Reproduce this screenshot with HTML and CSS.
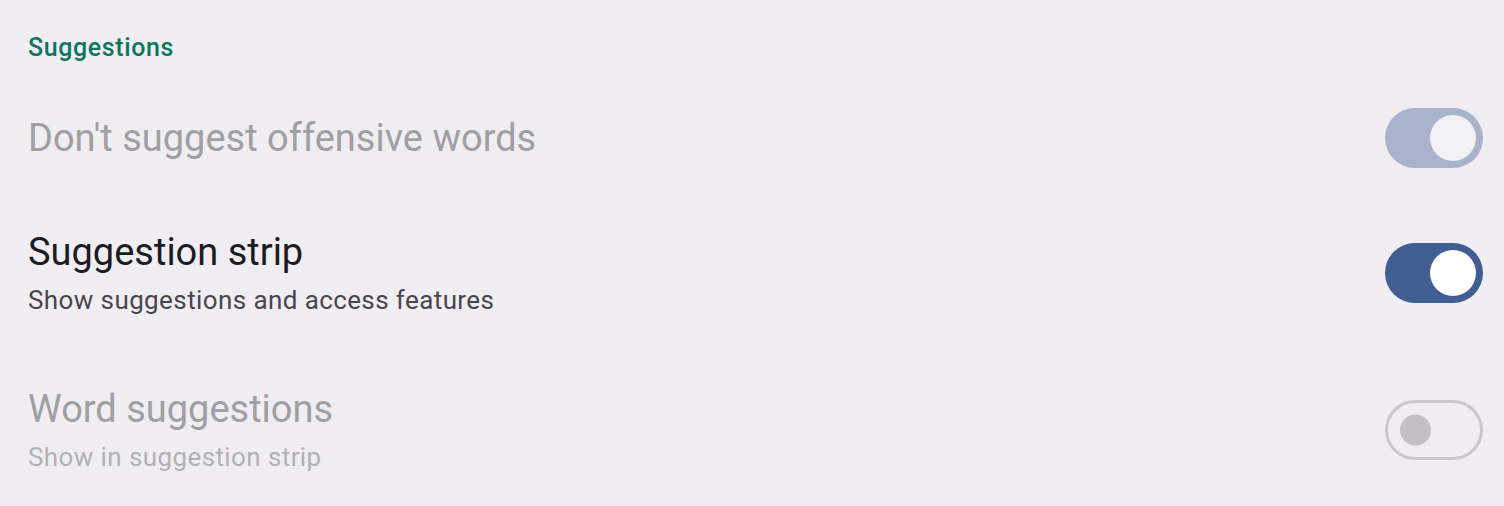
FILE: index.html
```html
<!DOCTYPE html>
<html>
<head>
  <title>Suggestions</title>
  <link rel="stylesheet" href="styles.css">
</head>
<body>
  <div class="settings">
    <h2 class="section-title">Suggestions</h2>

    <div class="pref disabled single">
      <div class="pref-text">
        <div class="pref-title">Don't suggest offensive words</div>
      </div>
      <div class="switch on"><div class="thumb"></div></div>
    </div>

    <div class="pref double">
      <div class="pref-text">
        <div class="pref-title">Suggestion strip</div>
        <div class="pref-summary">Show suggestions and access features</div>
      </div>
      <div class="switch on"><div class="thumb"></div></div>
    </div>

    <div class="pref disabled double last">
      <div class="pref-text">
        <div class="pref-title">Word suggestions</div>
        <div class="pref-summary">Show in suggestion strip</div>
      </div>
      <div class="switch off"><div class="thumb"></div></div>
    </div>
  </div>
</body>
</html>
```

FILE: styles.css
```css
html, body {
  margin: 0;
  height: 100%;
}

body {
  font-family: Roboto, "Noto Sans", sans-serif;
  background-color: #f0eef3;
  overflow: hidden;
}

.settings {
  padding: 0 21px 0 28px;
}

.section-title {
  margin: 0;
  padding-top: 32px;
  height: 84px;
  font-size: 25px;
  font-weight: 500;
  letter-spacing: 0.6px;
  line-height: 32px;
  color: #0d7560;
  box-sizing: border-box;
}

.pref {
  display: flex;
  align-items: center;
  justify-content: space-between;
}

.pref.single {
  height: 108px;
}

.pref.double {
  height: 162px;
}

.pref.last {
  height: 152px;
}

.pref-text {
  display: flex;
  flex-direction: column;
}

.pref-title {
  font-size: 38px;
  line-height: 44px;
  color: #1c1b1f;
}

.pref-summary {
  font-size: 26px;
  letter-spacing: 0.4px;
  line-height: 32px;
  margin-top: 10px;
  color: #49454f;
}

.pref.disabled .pref-title {
  color: #a09fa4;
}

.pref.disabled .pref-summary {
  color: #b3b1b6;
}

.switch {
  position: relative;
  width: 98px;
  height: 60px;
  border-radius: 30px;
  box-sizing: border-box;
}

.switch .thumb {
  position: absolute;
  top: 50%;
  border-radius: 50%;
  transform: translateY(-50%);
}

.switch.on {
  background-color: #405e91;
}

.switch.on .thumb {
  right: 7px;
  width: 46px;
  height: 46px;
  background-color: #ffffff;
}

.pref.disabled .switch.on {
  background-color: #a9b3cb;
}

.pref.disabled .switch.on .thumb {
  background-color: #f2f1f5;
}

.switch.off {
  border: 3px solid #cac8cd;
}

.switch.off .thumb {
  left: 12px;
  width: 31px;
  height: 31px;
  background-color: #c3c1c6;
}
```
